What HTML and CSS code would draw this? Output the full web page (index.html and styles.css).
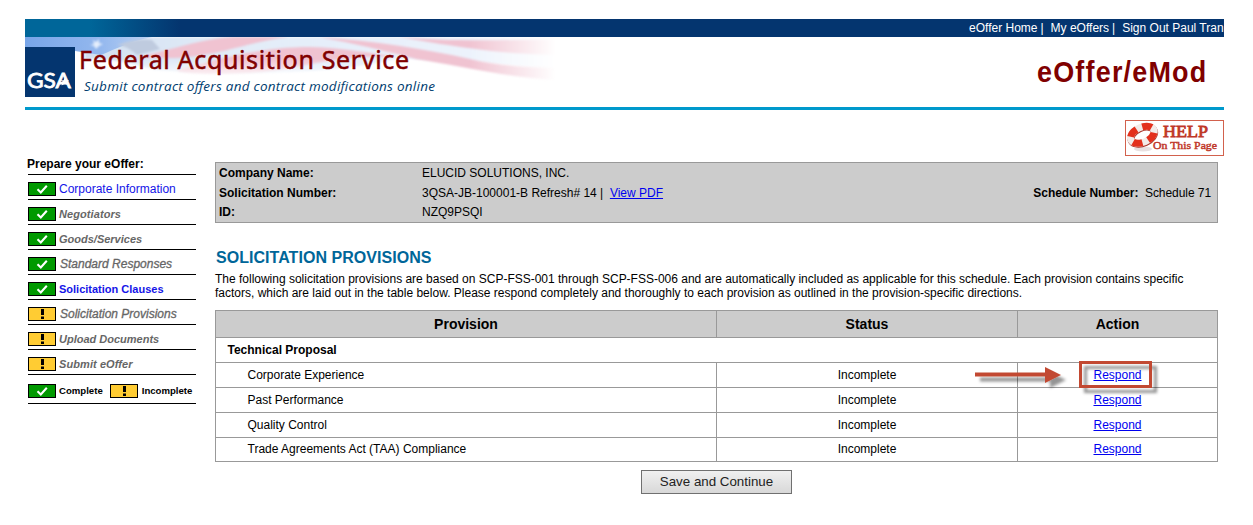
FILE: index.html
```html
<!DOCTYPE html>
<html lang="en">
<head>
<meta charset="utf-8">
<title>eOffer/eMod - Solicitation Provisions</title>
<link rel="stylesheet" href="styles.css">
</head>
<body>
<svg class="defs" width="0" height="0" aria-hidden="true">
  <symbol id="done" viewBox="0 0 28 14"><rect x=".5" y=".5" width="27" height="13" fill="#090" stroke="#000"/><path d="M9.5 7.2l3.3 3.2L18.8 3.8" fill="none" stroke="#fff" stroke-width="2.1"/></symbol>
  <symbol id="todo" viewBox="0 0 28 14"><rect x=".5" y=".5" width="27" height="13" fill="#fc3" stroke="#000"/><path d="M13 2h3v6h-3zM13 9.5h3V12h-3z"/></symbol>
</svg>
<div class="page">
  <nav class="topbar"><a>eOffer Home</a><span>|</span><a>My eOffers</a><span>|</span><a>Sign Out Paul Tran</a></nav>
  <header class="banner">
    <svg class="brand" width="600" height="70" viewBox="0 0 600 70">
      <defs>
        <linearGradient id="blue" x1="0" x2="1"><stop offset="0" stop-color="#78a5e8"/><stop offset=".6" stop-color="#94b8ee"/><stop offset="1" stop-color="#bdd3f4"/></linearGradient>
        <linearGradient id="pale" x1="0" x2="1"><stop offset="0" stop-color="#d3e0f1"/><stop offset=".3" stop-color="#e2ecf8"/><stop offset="1" stop-color="#f1f6fe"/></linearGradient>
        <linearGradient id="out" x1="0" x2="1"><stop offset=".74" stop-color="#fff"/><stop offset=".885" stop-color="#fff" stop-opacity="0"/></linearGradient>
        <linearGradient id="low" x1="0" x2="0" y1="0" y2="1"><stop offset=".35" stop-color="#000" stop-opacity="0"/><stop offset=".68" stop-color="#000"/></linearGradient>
        <linearGradient id="edge" x1="0" x2="1"><stop offset=".7" stop-color="#fff"/><stop offset="1" stop-color="#fff" stop-opacity="0"/></linearGradient>
        <mask id="lowmask" maskUnits="userSpaceOnUse" x="0" y="0" width="600" height="70"><rect x="51" width="300" height="70" fill="url(#edge)"/></mask>
        <mask id="fade" maskUnits="userSpaceOnUse" x="0" y="0" width="600" height="70"><rect width="600" height="70" fill="url(#out)"/><g mask="url(#lowmask)"><rect x="51" width="300" height="62" fill="url(#low)"/></g></mask>
        <filter id="soft" x="-5%" y="-20%" width="110%" height="140%"><feGaussianBlur stdDeviation=".8"/></filter>
      </defs>
      <g mask="url(#fade)">
        <path d="M60 0H560V36C480 28 430 22 370 22C310 36 220 40 130 33C100 24 80 22 60 22z" fill="url(#pale)" filter="url(#soft)"/>
        <path d="M0 0H127C103 5 91 12 76 18L50 14L0 11z" fill="url(#blue)"/>
        <path d="M92 8Q112 1 127 3L135 12L112 18Q101 8 92 8z" fill="#bfcbdf" filter="url(#soft)"/>
        <g fill="#f0c3d1" filter="url(#soft)">
          <path d="M110 21C150 12 178 1 211 0H264C220 5 190 21 142 21z"/>
          <path d="M151 33C190 25 225 10 286 10C320 11 350 17 374 20C334 18 306 23 272 30C230 38 180 39 155 35z"/>
          <path d="M294 0C350 4 400 12 445 22C475 29 500 30 530 31V43C480 40 430 28 391 22C350 11 320 5 294 0z"/>
          <path d="M374 0C420 4 460 4 535 2V18C475 17 445 11 415 7z"/>
        </g>
        <path d="M68 3l3 2 3-3v4l4 1-4 2-3 3-2-3-4-1 4-1z" fill="#e4eefc" filter="url(#soft)"/>
      </g>
      <rect y="10" width="50" height="50" fill="#04356f"/>
      <text class="gsa" x="2" y="51" textLength="44" lengthAdjust="spacingAndGlyphs">GSA</text>
      <path d="M40 40.5l1.2 2.6 2.8.2-2.2 1.9.8 2.8-2.6-1.6-3.4 2 1.3-3.3-2.6-1.6 3.2-.3z" fill="#fff"/>
      <text class="title" x="54" y="32" textLength="330" lengthAdjust="spacing">Federal Acquisition Service</text>
      <text class="tagline" x="59" y="54" textLength="351" lengthAdjust="spacing">Submit contract offers and contract modifications online</text>
    </svg>
    <svg class="product" width="170" height="36" viewBox="0 0 170 36"><text transform="scale(.93 1)" x="0" y="27" textLength="182" lengthAdjust="spacing">eOffer/eMod</text></svg>
  </header>
  <div class="helprow">
    <svg width="99" height="36" viewBox="0 0 99 36">
      <rect x=".5" y=".5" width="98" height="35" fill="#fff" stroke="#d2614d"/>
      <ellipse cx="18" cy="29" rx="9" ry="2.5" fill="#e8e0e0"/>
      <g fill="none" transform="rotate(-24 18 15)">
        <ellipse cx="17.5" cy="15.5" rx="12.5" ry="7.5" stroke="#a8352a" stroke-width="7"/>
        <ellipse cx="17.5" cy="14.5" rx="12.5" ry="7.5" stroke="#f2ebe8" stroke-width="7"/>
        <ellipse cx="17.5" cy="14.5" rx="12.5" ry="7.5" stroke="#e3301c" stroke-width="7" pathLength="80" stroke-dasharray="12 8" stroke-dashoffset="-4"/>
      </g>
      <text class="help" x="38" y="17" textLength="45" lengthAdjust="spacingAndGlyphs">HELP</text>
      <text class="onpage" x="28" y="29" textLength="64" lengthAdjust="spacingAndGlyphs">On This Page</text>
    </svg>
  </div>
  <div class="columns">
    <aside class="steps">
      <h2>Prepare your eOffer:</h2>
      <ul>
        <li><svg><use href="#done"/></svg><a class="plain">Corporate Information</a></li>
        <li><svg><use href="#done"/></svg><i class="s wide">Negotiators</i></li>
        <li><svg><use href="#done"/></svg><i class="s">Goods/Services</i></li>
        <li><svg><use href="#done"/></svg><i class="m">Standard Responses</i></li>
        <li><svg><use href="#done"/></svg><a class="s">Solicitation Clauses</a></li>
        <li><svg><use href="#todo"/></svg><i class="m">Solicitation Provisions</i></li>
        <li><svg><use href="#todo"/></svg><i class="s">Upload Documents</i></li>
        <li><svg><use href="#todo"/></svg><i class="s wide">Submit eOffer</i></li>
      </ul>
      <div class="legend"><svg><use href="#done"/></svg><b>Complete</b><svg><use href="#todo"/></svg><b class="last-label">Incomplete</b></div>
    </aside>
    <main>
      <section class="info">
        <b>Company Name:</b><span>ELUCID SOLUTIONS, INC.</span><span></span>
        <b>Solicitation Number:</b><span>3QSA-JB-100001-B Refresh# 14 |&nbsp; <a class="link">View PDF</a></span><span class="schedule"><b>Schedule Number:</b>&nbsp; Schedule 71</span>
        <b>ID:</b><span>NZQ9PSQI</span><span></span>
      </section>
      <h1>SOLICITATION PROVISIONS</h1>
      <p class="intro"><span class="l1">The following solicitation provisions are based on SCP-FSS-001 through SCP-FSS-006 and are automatically included as applicable for this schedule. Each provision contains specific</span><br><span>factors, which are laid out in the table below. Please respond completely and thoroughly to each provision as outlined in the provision-specific directions.</span></p>
      <table>
        <colgroup><col class="c1"><col class="c2"><col class="c3"></colgroup>
        <tr class="head"><th>Provision</th><th>Status</th><th>Action</th></tr>
        <tr><td class="group" colspan="3">Technical Proposal</td></tr>
        <tr><td>Corporate Experience</td><td>Incomplete</td><td><span class="target"><a class="link">Respond</a>
          <svg class="callout" width="190" height="44" viewBox="0 0 190 44">
            <defs><filter id="shadow" x="-10%" y="-30%" width="120%" height="170%"><feDropShadow dx="5" dy="5" stdDeviation="1.5" flood-color="#000" flood-opacity=".42"/></filter></defs>
            <g filter="url(#shadow)"><path d="M2 14.5H72V9L88 17L72 25V18.5H2z" fill="#c24a31"/><rect x="107.5" y="4.5" width="70" height="24" fill="none" stroke="#c24a31" stroke-width="3"/></g>
          </svg></span></td></tr>
        <tr><td>Past Performance</td><td>Incomplete</td><td><a class="link">Respond</a></td></tr>
        <tr><td>Quality Control</td><td>Incomplete</td><td><a class="link">Respond</a></td></tr>
        <tr class="last"><td>Trade Agreements Act (TAA) Compliance</td><td>Incomplete</td><td><a class="link">Respond</a></td></tr>
      </table>
      <div class="actions"><button>Save and Continue</button></div>
    </main>
  </div>
</div>
</body>
</html>
```
FILE: styles.css
```css
* { box-sizing: border-box; }
body { margin: 0; background: #fff; color: #000; font: 12px/14px "Liberation Sans", Arial, sans-serif; overflow: hidden; }
.defs { position: absolute; }
.page { width: 1199px; margin: 19px 0 0 25px; }
.topbar { height: 18px; padding-left: 944px; overflow: hidden; white-space: nowrap; color: #fff; line-height: 18px; display: flex; background: linear-gradient(90deg, #006699 0, #006699 65px, #04356f 155px); }
.topbar a { flex: none; }
.topbar span { margin: 0 7px 0 3px; }
.banner { height: 73px; border-bottom: 3px solid #0099cc; display: flex; justify-content: space-between; }
.brand { display: block; }
.product { margin: 18px 17px 0 0; }
.gsa { font: 400 22px "Lato", sans-serif; fill: #fff; stroke: #fff; stroke-width: .8px; }
.title { font: 400 25px "Noto Sans", sans-serif; fill: #800000; stroke: #800000; stroke-width: .5px; }
.tagline { font: italic 13.5px "Open Sans", sans-serif; fill: #003d6f; }
.product text { font: 700 29px "Liberation Sans", Arial, sans-serif; fill: #800000; }
.helprow { height: 46px; padding-top: 10px; display: flex; justify-content: flex-end; }
.help { font: 400 17px "Liberation Serif", serif; fill: #bf3628; stroke: #bf3628; stroke-width: .8px; }
.onpage { font: 400 11px "Liberation Serif", serif; fill: #bf3628; stroke: #bf3628; stroke-width: .45px; }
.columns { display: flex; align-items: flex-start; }
.steps { width: 171px; padding-left: 3px; flex: none; }
.steps h2 { margin: 0 0 0 -1px; height: 18px; line-height: 16px; font-size: 12px; }
.steps ul { margin: 0; padding: 0; list-style: none; border-top: 1px solid #000; }
.steps li { height: 25px; border-bottom: 1px solid #000; display: flex; align-items: center; padding-top: 4px; }
.steps svg { width: 28px; height: 14px; flex: none; margin-right: 3px; }
.steps li a { color: #1414e8; white-space: nowrap; }
.steps i { color: #666; white-space: nowrap; }
.steps .s { font-weight: 700; font-size: 11px; }
.steps .wide { letter-spacing: .08px; }
.steps .m { font-size: 12px; margin-left: 1px; -webkit-text-stroke: .3px #666; }
.legend { height: 29px; display: flex; align-items: center; padding-top: 4px; border-bottom: 1px solid #000; font-size: 9.6px; }
.legend b + svg { margin-left: 7px; }
.last-label { margin-left: 1px; }
main { width: 1003px; margin-left: 19px; padding-top: 6px; }
.info { height: 61px; border: 1px solid #999; background: #ccc; display: grid; grid-template-columns: 203px 1fr auto; grid-template-rows: 20px 20px 18px; align-items: center; padding: 0 6px 0 3px; white-space: nowrap; }
.schedule { letter-spacing: -.06px; }
.link { color: #0000f0; text-decoration: underline; }
h1 { margin: 26px 0 0 1px; color: #069; font-size: 16px; line-height: 18px; letter-spacing: .04px; }
.intro { margin: 5px 0 0; height: 38px; white-space: nowrap; }
.l1 { letter-spacing: -.008px; }
table { border-collapse: collapse; table-layout: fixed; width: 1003px; }
.c1 { width: 501px; } .c2 { width: 301px; } .c3 { width: 200px; }
th, td { border: 1px solid #999; padding: 0; height: 25px; text-align: center; }
.head th { height: 27px; background: #ccc; font-size: 14px; }
td:first-child { text-align: left; padding-left: 31.5px; }
td.group:first-child { padding-left: 11.5px; font-weight: 700; }
.last td { height: 24px; padding-bottom: 2px; }
.target { position: relative; display: inline-block; }
.callout { position: absolute; left: -120px; top: -10px; overflow: visible; }
.actions { padding-top: 8px; text-align: center; }
button { width: 151px; height: 24px; border: 1px solid #707070; background: linear-gradient(#f0f0f0, #d8d8d8); color: #222; font: 13.33px "Liberation Sans", Arial, sans-serif; padding: 0 0 2px; }
```
